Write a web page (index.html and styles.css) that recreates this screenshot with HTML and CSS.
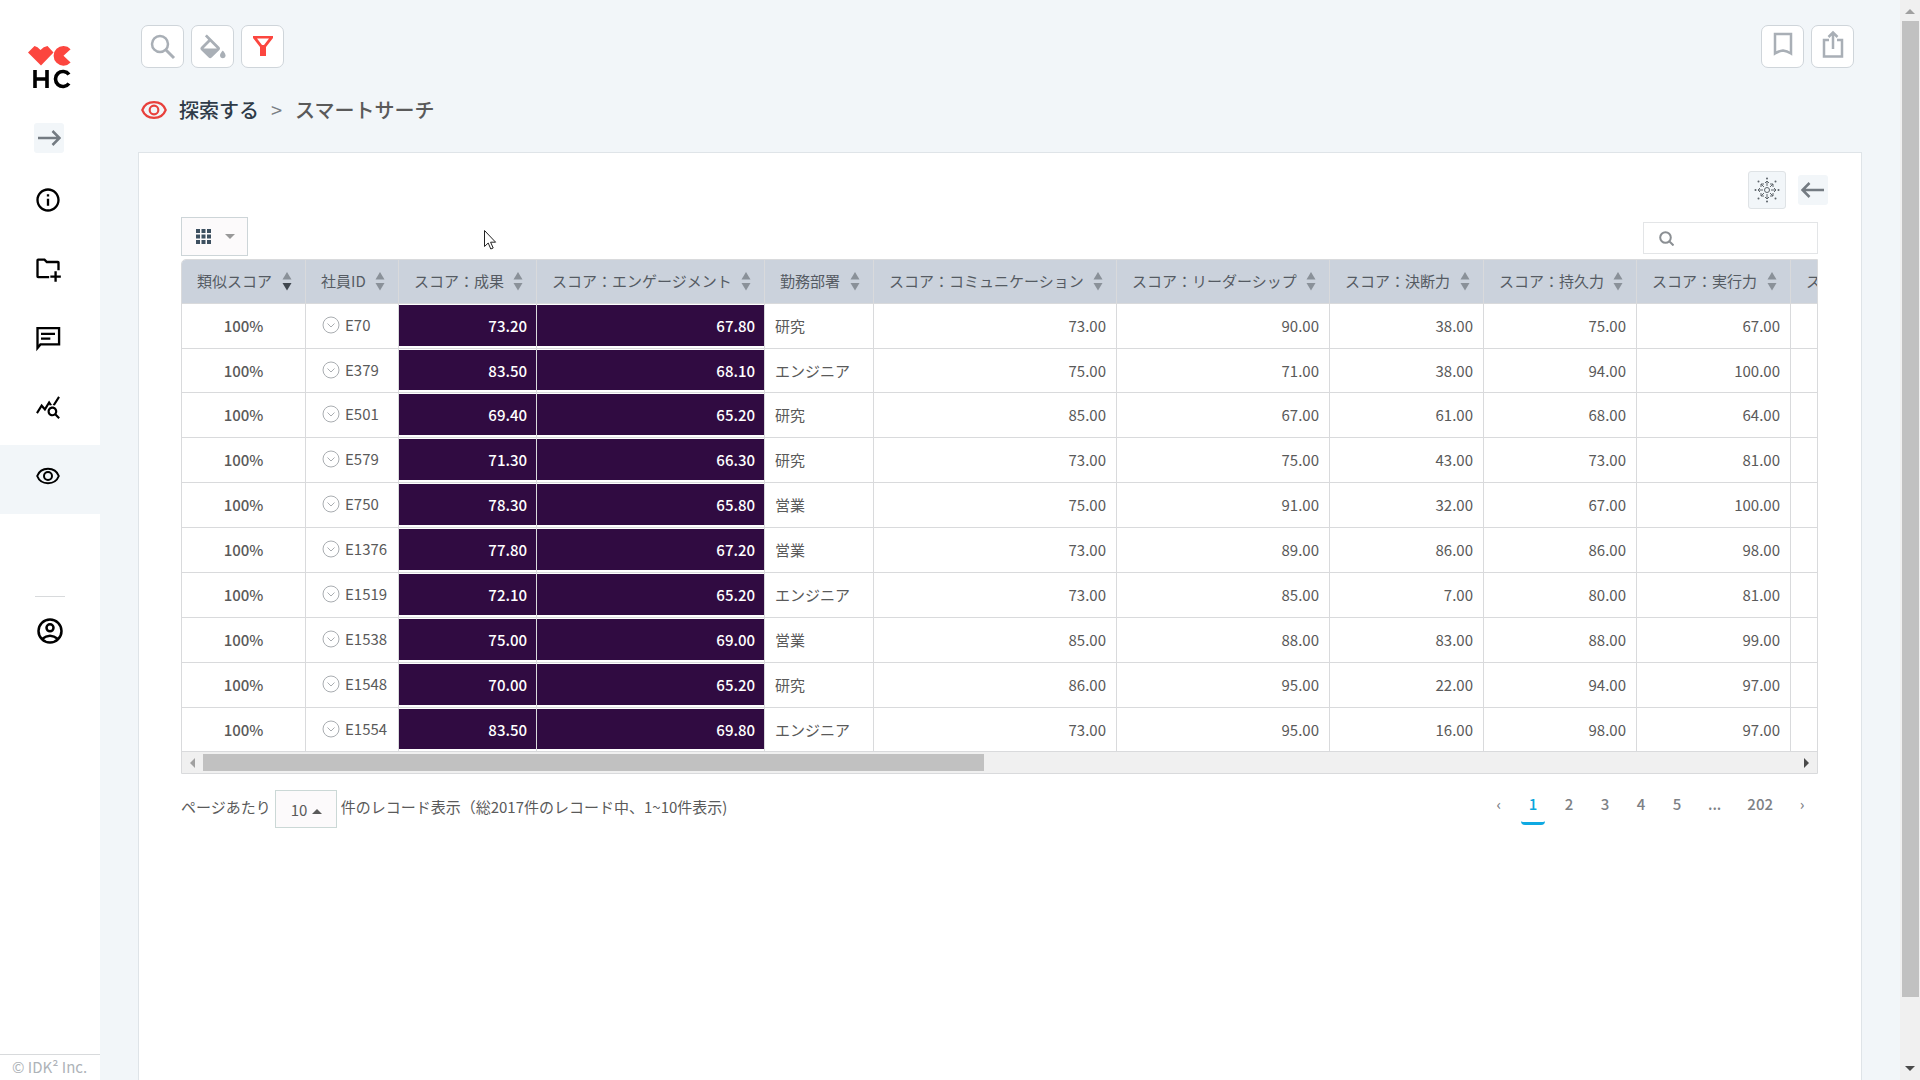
FILE: index.html
```html
<!DOCTYPE html>
<html lang="ja">
<head>
<meta charset="utf-8">
<title>スマートサーチ</title>
<link rel="stylesheet" href="styles.css">
</head>
<body>
<svg class="defs" aria-hidden="true">
  <symbol id="sort" viewBox="0 0 10 20"><path class="sort-up" d="M5 1l4.500 7.500h-9z"/><path class="sort-down" d="M5 19.500l4.500-7.500h-9z"/></symbol>
  <symbol id="more" viewBox="0 0 18 18"><circle cx="9" cy="9" r="8"/><path d="M5.500 7.500L9 11l3.500-3.500"/></symbol>
  <symbol id="eye" viewBox="0 0 24 24"><path d="M1.200 12C3 7.300 7.200 4.800 12 4.800S21 7.300 22.800 12C21 16.700 16.800 19.200 12 19.200S3 16.700 1.200 12z"/><circle cx="12" cy="12" r="4"/></symbol>
</svg>
<div class="app">
  <aside class="sidebar">
    <a class="logo" href="#" aria-label="VC HC">
      <svg viewBox="0 0 44 44" width="44" height="44"><path fill="#fc463f" d="M0 7.500L6.500 1Q9.500 1.500 12.500 5Q15.500 1.500 19.500 1L25.500 7.500L13 20.500zM35.500 10.800L42.600 17.500A9.800 9.800 0 1 1 42.600 4.200z"/><path fill="none" stroke="#000" stroke-width="3.600" d="M7 25v18M19 25v18M7 34h12M41 29.500A7.500 7.500 0 1 0 41 38.500"/></svg>
    </a>
    <button class="square expand" aria-label="メニューを開く"><svg class="line" viewBox="0 0 24 24" width="24" height="24"><path d="M1 12h21M15.500 5l7 7-7 7"/></svg></button>
    <nav class="nav">
      <a href="#" aria-label="情報"><svg viewBox="0 0 24 24" width="28" height="28"><path d="M11 7h2v2h-2zm0 4h2v6h-2zm1-9C6.480 2 2 6.480 2 12s4.480 10 10 10 10-4.480 10-10S17.520 2 12 2zm0 18c-4.410 0-8-3.590-8-8s3.590-8 8-8 8 3.590 8 8-3.590 8-8 8z"/></svg></a>
      <a href="#" aria-label="フォルダ追加"><svg class="line" viewBox="0 0 24 24" width="28" height="28"><path d="M13 19H3.500Q3 19 3 18.500V4.500Q3 4 3.500 4H9l2 2h9.500Q21 6 21 6.500V13M18.500 14v9M14 18.500h9"/></svg></a>
      <a href="#" aria-label="コメント"><svg class="line" viewBox="0 0 24 24" width="28" height="28"><path d="M3 20.500V3.500h18.500v14H5.500zM6 8.500h12M6 12.500h8"/></svg></a>
      <a href="#" aria-label="分析"><svg viewBox="0 0 24 24" width="26" height="26"><path d="M19.880 18.470c.440-.700.700-1.510.700-2.390 0-2.490-2.010-4.500-4.500-4.500s-4.500 2.010-4.500 4.500 2.010 4.500 4.490 4.500c.880 0 1.700-.260 2.390-.700L21.580 23 23 21.580l-3.120-3.110zm-3.800.110c-1.380 0-2.500-1.120-2.500-2.500s1.120-2.500 2.500-2.500 2.500 1.120 2.500 2.500-1.120 2.500-2.500 2.500zm-.360-8.500c-.740.020-1.450.180-2.100.450l-.550-.830-3.800 6.180-3.010-3.520-3.630 5.810L1 17l5-8 3 3.500L13 6l2.720 4.080zm2.590.500c-.640-.280-1.330-.450-2.050-.490L21.380 2 23 3.180l-4.690 7.400z"/></svg></a>
      <a class="active" href="#" aria-label="探索"><svg class="line" width="24" height="24"><use href="#eye"/></svg></a>
    </nav>
    <hr>
    <a class="account" href="#" aria-label="アカウント"><svg class="line" viewBox="0 0 26 26" width="26" height="26"><circle cx="13" cy="13" r="11.500"/><circle cx="13" cy="9.800" r="3.500"/><path d="M5 21Q13 14.500 21 21"/></svg></a>
    <footer>© IDK² Inc.</footer>
  </aside>

  <main>
    <div class="toolbar">
      <button class="tool" aria-label="検索"><svg class="line" viewBox="0 0 26 26" width="26" height="26"><circle cx="10" cy="10" r="8"/><path stroke-width="3" d="M16 16l8 8"/></svg></button>
      <button class="tool" aria-label="塗りつぶし"><svg viewBox="2 0 20 18" width="28" height="26"><path d="M16.560 8.940L7.620 0 6.210 1.410l2.380 2.380-5.150 5.150c-.590.590-.590 1.540 0 2.120l5.500 5.500c.290.290.680.440 1.060.440s.770-.150 1.060-.440l5.500-5.500c.590-.580.590-1.530 0-2.120zM5.210 10L10 5.210 14.790 10H5.210zM19 11.500s-2 2.170-2 3.500c0 1.100.900 2 2 2s2-.900 2-2c0-1.330-2-3.500-2-3.500z"/></svg></button>
      <button class="tool on" aria-label="フィルター"><svg viewBox="0 0 20 20" width="20" height="20"><path d="M0 0h20v2L13 11v9H7v-9L0 2zM4 2.500L9 9h2L16 2.500z"/></svg></button>
      <span class="spacer"></span>
      <button class="tool high" aria-label="ブックマーク"><svg class="line" viewBox="0 0 20 24" width="20" height="24"><path d="M2 2h16v19.500Q14 19 10 18.500Q6 19 2 21.500z"/></svg></button>
      <button class="tool high" aria-label="共有"><svg class="line" viewBox="0 0 22 28" width="22" height="28"><path d="M7 10H2v16.500h18V10h-5M11 19V2.500M6.500 7L11 2.500 15.500 7"/></svg></button>
    </div>

    <div class="crumbs">
      <svg class="line" width="26" height="26"><use href="#eye"/></svg>
      <a class="root" href="#">探索する</a><span class="sep">&gt;</span><a href="#">スマートサーチ</a>
    </div>

    <section class="card">
      <div class="card-actions">
        <button class="cluster" aria-label="クラスター表示"><svg viewBox="-13 -13 26 26" width="26" height="26"><circle r="2.500"/><path d="M0-4V-9M-2-7L0-9 2-7M0 4V9M-2 7L0 9 2 7M-4 0H-9M-7-2L-9 0-7 2M4 0H9M7-2L9 0 7 2M-3-3L-6-6M-6-3V-6H-3M3-3L6-6M3-6H6V-3M-3 3L-6 6M-6 3V6H-3M3 3L6 6M3 6H6V3"/><path class="dots" d="M0-11.500h.01M0 11.500h.01M-11.500 0h.01M11.500 0h.01M-8.500-8.500h.01M8.500-8.500h.01M-8.500 8.500h.01M8.500 8.500h.01"/></svg></button>
        <button class="square" aria-label="戻る"><svg class="line" viewBox="0 0 24 24" width="24" height="24"><path d="M23 12H2M8.500 5l-7 7 7 7"/></svg></button>
      </div>
      <div class="table-tools">
        <button class="columns" aria-label="列の選択"><svg viewBox="0 0 15 15" width="15" height="15"><path d="M0 0h4v4H0zM5.500 0h4v4h-4zM11 0h4v4h-4zM0 5.500h4v4H0zM5.500 5.500h4v4h-4zM11 5.500h4v4h-4zM0 11h4v4H0zM5.500 11h4v4h-4zM11 11h4v4h-4z"/></svg><svg class="caret" viewBox="0 0 10 5" width="10" height="5"><path d="M0 0h10L5 5z"/></svg></button>
        <label class="search"><svg class="line" viewBox="0 0 15 15" width="15" height="15"><circle cx="6.500" cy="6.500" r="5.300"/><path d="M10.500 10.500l4 4"/></svg><input type="search" aria-label="表内検索"></label>
      </div>

      <div class="grid">
        <table>
          <colgroup><col class="c-sim"><col class="c-id"><col class="c-result"><col class="c-eng"><col class="c-dept"><col class="c-com"><col class="c-lead"><col class="c-score"><col class="c-last"><col class="c-score"><col class="c-score"></colgroup>
          <thead><tr>
            <th class="sorted"><div>類似スコア<svg><use href="#sort"/></svg></div></th>
            <th><div>社員ID<svg><use href="#sort"/></svg></div></th>
            <th><div>スコア：成果<svg><use href="#sort"/></svg></div></th>
            <th><div>スコア：エンゲージメント<svg><use href="#sort"/></svg></div></th>
            <th><div>勤務部署<svg><use href="#sort"/></svg></div></th>
            <th><div>スコア：コミュニケーション<svg><use href="#sort"/></svg></div></th>
            <th><div>スコア：リーダーシップ<svg><use href="#sort"/></svg></div></th>
            <th><div>スコア：決断力<svg><use href="#sort"/></svg></div></th>
            <th><div>スコア：持久力<svg><use href="#sort"/></svg></div></th>
            <th><div>スコア：実行力<svg><use href="#sort"/></svg></div></th>
            <th><div>ス</div></th>
          </tr></thead>
          <tbody>
            <tr><td class="sim">100%</td><td class="id"><svg><use href="#more"/></svg>E70</td><td class="hot">73.20</td><td class="hot">67.80</td><td class="dept">研究</td><td>73.00</td><td>90.00</td><td>38.00</td><td>75.00</td><td>67.00</td><td></td></tr>
            <tr><td class="sim">100%</td><td class="id"><svg><use href="#more"/></svg>E379</td><td class="hot">83.50</td><td class="hot">68.10</td><td class="dept">エンジニア</td><td>75.00</td><td>71.00</td><td>38.00</td><td>94.00</td><td>100.00</td><td></td></tr>
            <tr><td class="sim">100%</td><td class="id"><svg><use href="#more"/></svg>E501</td><td class="hot">69.40</td><td class="hot">65.20</td><td class="dept">研究</td><td>85.00</td><td>67.00</td><td>61.00</td><td>68.00</td><td>64.00</td><td></td></tr>
            <tr><td class="sim">100%</td><td class="id"><svg><use href="#more"/></svg>E579</td><td class="hot">71.30</td><td class="hot">66.30</td><td class="dept">研究</td><td>73.00</td><td>75.00</td><td>43.00</td><td>73.00</td><td>81.00</td><td></td></tr>
            <tr><td class="sim">100%</td><td class="id"><svg><use href="#more"/></svg>E750</td><td class="hot">78.30</td><td class="hot">65.80</td><td class="dept">営業</td><td>75.00</td><td>91.00</td><td>32.00</td><td>67.00</td><td>100.00</td><td></td></tr>
            <tr><td class="sim">100%</td><td class="id"><svg><use href="#more"/></svg>E1376</td><td class="hot">77.80</td><td class="hot">67.20</td><td class="dept">営業</td><td>73.00</td><td>89.00</td><td>86.00</td><td>86.00</td><td>98.00</td><td></td></tr>
            <tr><td class="sim">100%</td><td class="id"><svg><use href="#more"/></svg>E1519</td><td class="hot">72.10</td><td class="hot">65.20</td><td class="dept">エンジニア</td><td>73.00</td><td>85.00</td><td>7.00</td><td>80.00</td><td>81.00</td><td></td></tr>
            <tr><td class="sim">100%</td><td class="id"><svg><use href="#more"/></svg>E1538</td><td class="hot">75.00</td><td class="hot">69.00</td><td class="dept">営業</td><td>85.00</td><td>88.00</td><td>83.00</td><td>88.00</td><td>99.00</td><td></td></tr>
            <tr><td class="sim">100%</td><td class="id"><svg><use href="#more"/></svg>E1548</td><td class="hot">70.00</td><td class="hot">65.20</td><td class="dept">研究</td><td>86.00</td><td>95.00</td><td>22.00</td><td>94.00</td><td>97.00</td><td></td></tr>
            <tr><td class="sim">100%</td><td class="id"><svg><use href="#more"/></svg>E1554</td><td class="hot">83.50</td><td class="hot">69.80</td><td class="dept">エンジニア</td><td>73.00</td><td>95.00</td><td>16.00</td><td>98.00</td><td>97.00</td><td></td></tr>
          </tbody>
        </table>
        <div class="hscroll" aria-hidden="true">
          <svg class="off" viewBox="0 0 5 10" width="5" height="10"><path d="M5 0v10L0 5z"/></svg>
          <div class="track"><div class="thumb"></div></div>
          <svg viewBox="0 0 5 10" width="5" height="10"><path d="M0 0v10l5-5z"/></svg>
        </div>
      </div>

      <div class="below">
        <div class="per-page">
          <label for="size">ページあたり</label>
          <span class="size-box"><select id="size"><option>10</option></select><svg viewBox="0 0 10 5" width="10" height="5"><path d="M0 5h10L5 0z"/></svg></span>
          <span class="summary">件のレコード表示（総2017件のレコード中、1~10件表示)</span>
        </div>
        <nav class="pager">
          <a class="step" href="#">‹</a><a class="current" href="#">1</a><a href="#">2</a><a href="#">3</a><a href="#">4</a><a href="#">5</a><span>...</span><a href="#">202</a><a class="step" href="#">›</a>
        </nav>
      </div>
      <svg class="pointer" viewBox="0 0 13 20" width="13" height="20"><path d="M.5.500v16l3.700-3.500 2.600 6 2.400-1-2.600-5.800h5z"/></svg>
    </section>
  </main>

  <div class="vscroll" aria-hidden="true">
    <svg class="off" viewBox="0 0 10 5" width="10" height="5"><path d="M0 5h10L5 0z"/></svg>
    <div class="track"><div class="thumb"></div></div>
    <svg viewBox="0 0 10 5" width="10" height="5"><path d="M0 0h10L5 5z"/></svg>
  </div>
</div>
</body>
</html>
```
FILE: styles.css
```css
* { box-sizing: border-box; }
body {
  margin: 0;
  font: 15px/24px "Noto Sans CJK JP", "Noto Sans", sans-serif;
  color: #5a5a5a;
  background: #f2f6f9;
}
a { color: inherit; text-decoration: none; }
button, input, select { font: inherit; color: inherit; padding: 0; margin: 0; }
svg { display: block; flex: none; fill: currentColor; }
.defs { width: 0; height: 0; position: absolute; }
.line { fill: none; stroke: currentColor; stroke-width: 2; }

.app { display: flex; height: 100vh; overflow: hidden; }

/* sidebar */
.sidebar {
  flex: none;
  width: 100px;
  display: flex;
  flex-direction: column;
  background: #fff;
  color: #000;
}
.logo { margin: 45px 0 34px 28px; }
.square {
  display: flex;
  align-items: center;
  justify-content: center;
  width: 30px;
  height: 30px;
  border: 0;
  border-radius: 3px;
  background: #f2f6f9;
  color: #747b82;
}
.square .line { stroke-width: 2.5; }
.expand { margin-left: 34px; }
.nav { margin-top: 16px; }
.nav a {
  display: flex;
  align-items: center;
  justify-content: center;
  height: 69px;
  padding: 0 4px 7px 0;
}
.nav .active { background: #f2f6f9; }
.sidebar hr {
  width: 30px;
  margin: 82px 35px 21px;
  border: 0;
  border-top: 1px solid #d8dadc;
}
.account { margin-left: 37px; }
.account .line { stroke-width: 2.5; }
.sidebar footer {
  margin-top: auto;
  padding: 0 0 1px 12px;
  border-top: 1px solid #d8dadc;
  color: #aeb3b8;
  white-space: nowrap;
}

/* top area */
main {
  flex: 1;
  min-width: 0;
  display: flex;
  flex-direction: column;
  padding: 25px 38px 0;
}
.toolbar { display: flex; gap: 7px; padding: 0 8px 0 3px; }
.tool {
  display: flex;
  align-items: center;
  justify-content: center;
  width: 43px;
  height: 43px;
  border: 1px solid #cfd5da;
  border-radius: 7px;
  background: #fff;
  color: #a9afb6;
}
.tool .line { stroke-width: 2.5; }
.tool.high { padding-bottom: 6px; }
.tool.on { padding-bottom: 2px; color: #fc463f; }
.spacer { flex: 1; }
.crumbs {
  display: flex;
  align-items: center;
  height: 30px;
  margin: 27px 0;
  padding-left: 3px;
  font-size: 20px;
  font-weight: 500;
}
.crumbs svg { color: #e8403c; margin-right: 12px; }
.crumbs .root { color: #2f3b48; }
.crumbs .sep { margin: 0 13px 0 12px; font-weight: 400; color: #7a7f85; }

/* card */
.card {
  position: relative;
  flex: 1;
  padding: 18px 43px 0 42px;
  border: 1px solid #dfe4e8;
  border-bottom: 0;
  background: #fff;
}
.card-actions {
  display: flex;
  justify-content: flex-end;
  align-items: center;
  gap: 12px;
  margin-right: -10px;
}
.cluster {
  display: flex;
  align-items: center;
  justify-content: center;
  width: 38px;
  height: 38px;
  border: 1px solid #dfe3e6;
  border-radius: 3px;
  background: #f2f6f9;
  color: #5e656b;
}
.cluster svg { fill: none; stroke: currentColor; stroke-width: 1; }
.cluster .dots { stroke-width: 2; stroke-linecap: round; }
.table-tools {
  display: flex;
  justify-content: space-between;
  align-items: center;
  height: 39px;
  margin: 8px 0 3px;
}
.columns {
  display: flex;
  align-items: center;
  gap: 14px;
  width: 67px;
  height: 39px;
  padding-left: 14px;
  border: 1px solid #cdd5d8;
  background: #fcfafb;
  color: #3d5060;
}
.columns .caret { color: #999; }
.search {
  display: flex;
  align-items: center;
  gap: 8px;
  width: 175px;
  height: 32px;
  margin-top: 3px;
  padding: 1px 8px 0 15px;
  border: 1px solid #e3e5e7;
  color: #8b8f93;
}
.search input {
  flex: 1;
  min-width: 0;
  border: 0;
  outline: 0;
  background: none;
}

/* data grid */
.grid { border: 1px solid #d9dadc; border-top-left-radius: 5px; overflow: hidden; }
table { width: 1762px; table-layout: fixed; border-collapse: separate; border-spacing: 0; }
.c-sim { width: 124px; }
.c-id { width: 93px; }
.c-result { width: 138px; }
.c-eng { width: 228px; }
.c-dept { width: 109px; }
.c-com { width: 243px; }
.c-lead { width: 213px; }
.c-score { width: 154px; }
.c-last { width: 153px; }
th, td {
  padding: 0 10px;
  border: 0 solid #d9dadc;
  border-width: 0 1px 1px 0;
  white-space: nowrap;
}
th {
  height: 44px;
  padding: 0 13px 2px 15px;
  background: #cbd2dc;
  color: #555b63;
  font-weight: 400;
}
th div { display: flex; align-items: center; justify-content: space-between; }
th svg { width: 10px; height: 20px; color: #8a9199; }
.sorted svg { --down: #3f464e; }
.sort-down { fill: var(--down, currentColor); }
tbody tr { height: 45px; }
tbody tr:nth-child(8n+2) { height: 44px; }
td { text-align: right; }
.sim { text-align: center; font-weight: 500; }
.dept { text-align: left; }
.id { padding: 0 0 2px 16px; text-align: left; }
.id svg {
  display: inline-block;
  width: 18px;
  height: 18px;
  margin-right: 5px;
  vertical-align: -3px;
  fill: none;
  stroke: #a9adb1;
}
.hot {
  padding-right: 9px;
  background: #300b41;
  background-clip: padding-box;
  box-shadow: inset 0 1px #fff, inset 0 -2px #fff;
  color: #fff;
  font-weight: 500;
}

/* scroll bars */
.hscroll, .vscroll {
  display: flex;
  align-items: center;
  background: #f0f0f0;
  color: #4a4a4a;
}
.off { color: #a0a0a0; }
.track { flex: 1; }
.thumb { background: #c1c1c1; }
.hscroll { height: 21px; gap: 8px; padding: 0 8px; }
.hscroll .thumb { width: 49%; height: 17px; }
.vscroll { flex: none; flex-direction: column; gap: 7px; width: 20px; padding: 9px 0; }
.vscroll .track { width: 17px; }
.vscroll .thumb { height: 94%; }

/* paging */
.below { display: flex; justify-content: space-between; margin-top: 16px; }
.per-page { display: flex; align-items: center; gap: 4px; height: 38px; }
.per-page label, .summary { padding-bottom: 4px; }
.size-box { position: relative; }
.size-box select {
  display: block;
  appearance: none;
  width: 62px;
  height: 38px;
  padding: 2px 0 0 15px;
  border: 1px solid #cbd8d6;
  border-radius: 0;
  background: #fcfafb;
}
.size-box svg { position: absolute; right: 15px; top: 19px; pointer-events: none; }
.pager { display: flex; padding-top: 2px; font-weight: 500; color: #7d8185; }
.pager > * { min-width: 24px; height: 33px; margin: 0 6px; padding: 0 7px; text-align: center; }
.pager .step { min-width: 20px; }
.pager .current { color: #0aa5dc; border-bottom: 3px solid #0fa9e2; border-radius: 4px; }

.pointer { position: absolute; left: 345px; top: 77px; fill: #fff; stroke: #222; }
```
